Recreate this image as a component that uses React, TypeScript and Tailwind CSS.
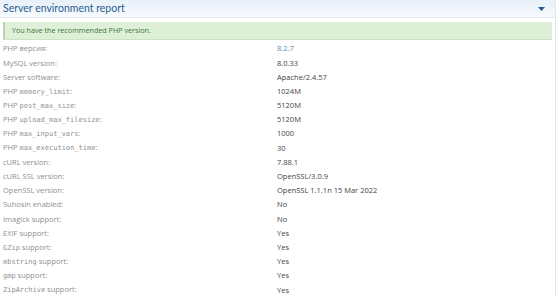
import React from "react";

const mono = "font-['DejaVu_Sans_Mono',monospace] text-[7px]";

type Row = { label: React.ReactNode; value: string; link?: boolean };

const rows: Row[] = [
  { label: "PHP версия:", value: "8.2.7", link: true },
  { label: "MySQL version:", value: "8.0.33" },
  { label: "Server software:", value: "Apache/2.4.57" },
  { label: <>PHP <code className={mono}>memory_limit</code>:</>, value: "1024M" },
  { label: <>PHP <code className={mono}>post_max_size</code>:</>, value: "5120M" },
  { label: <>PHP <code className={mono}>upload_max_filesize</code>:</>, value: "5120M" },
  { label: <>PHP <code className={mono}>max_input_vars</code>:</>, value: "1000" },
  { label: <>PHP <code className={mono}>max_execution_time</code>:</>, value: "30" },
  { label: "cURL version:", value: "7.88.1" },
  { label: "cURL SSL version:", value: "OpenSSL/3.0.9" },
  { label: "OpenSSL version:", value: "OpenSSL 1.1.1n 15 Mar 2022" },
  { label: "Suhosin enabled:", value: "No" },
  { label: "Imagick support:", value: "No" },
  { label: "EXIF support:", value: "Yes" },
  { label: <><code className={mono}>GZip</code> support:</>, value: "Yes" },
  { label: <><code className={mono}>mbstring</code> support:</>, value: "Yes" },
  { label: <><code className={mono}>gmp</code> support:</>, value: "Yes" },
  { label: <><code className={mono}>ZipArchive</code> support:</>, value: "Yes" },
];

export default function App() {
  return (
    <div className="w-[560px] h-[300px] overflow-hidden bg-white font-['Open_Sans',sans-serif]">
      <div className="w-[556px] border-r border-[#e4e8ee]">
        <div className="h-[18px] flex items-center justify-between pl-[3px] pr-[10px] bg-gradient-to-b from-[#e8f0f9] to-[#f7fafd] border-b border-[#dfe6ee]">
          <span className="font-['Lato',sans-serif] text-[10.5px] leading-none text-[#2c5f92]">Server environment report</span>
          <svg width="7" height="4" viewBox="0 0 7 4">
            <path d="M0 0 H7 L3.5 4 Z" fill="#2b5a8a" />
          </svg>
        </div>
        <div className="px-[3px] pt-[4px]">
          <div className="h-[18px] flex items-center bg-[#dff0d8] border-l-2 border-[#b7d7a8] border-b border-b-[#cfe3c4] pl-[7px] text-[7.2px] text-[#3c763d] w-[549px]">
            You have the recommended PHP version.
          </div>
        </div>
        <div className="px-[3px] pt-[2px]">
          {rows.map((r, i) => (
            <div key={i} className="h-[14.2px] flex items-center text-[7.5px] leading-none">
              <div className="w-[274px] text-[#8f8f8f]">{r.label}</div>
              <div className={r.link ? "text-[#4a8bc0]" : "text-[#444]"}>{r.value}</div>
            </div>
          ))}
        </div>
      </div>
    </div>
  );
}
